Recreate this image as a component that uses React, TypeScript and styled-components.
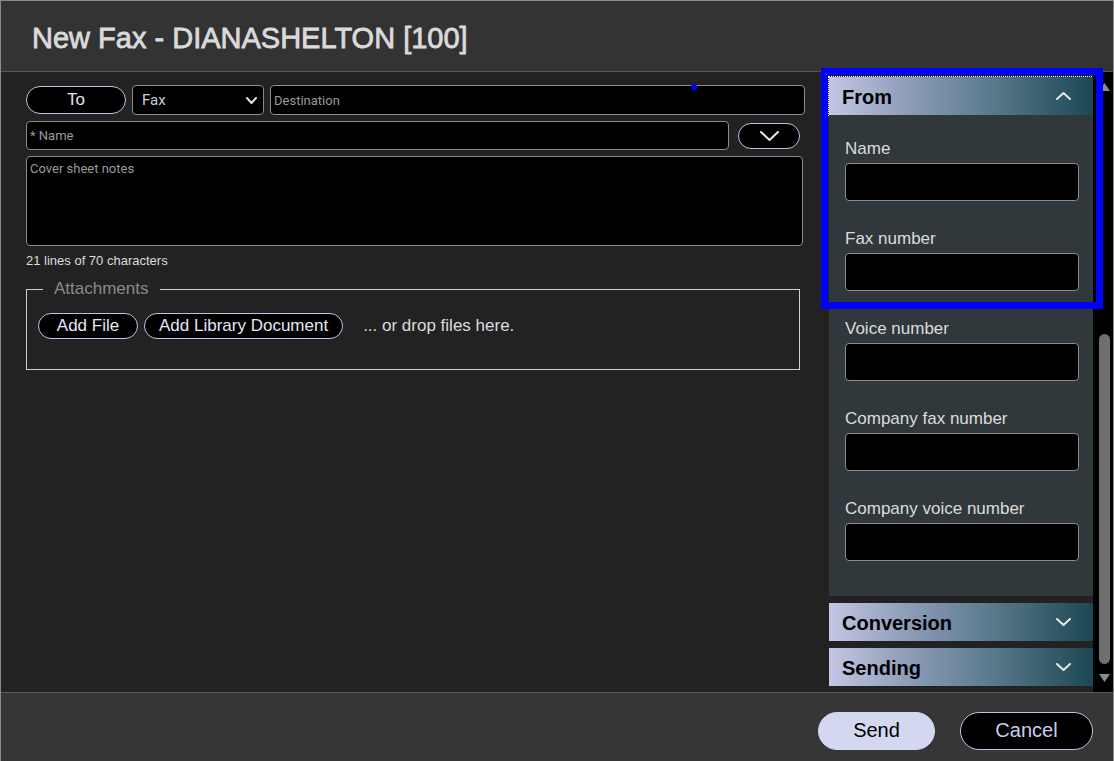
import React from "react"
import styled, { createGlobalStyle } from "styled-components"

const GlobalStyle = createGlobalStyle`
  html, body {
    margin: 0;
    padding: 0;
    background: #222;
    overflow: hidden;
  }
  * {
    box-sizing: border-box;
  }
`

const lavender = "#bfc3e6"

const Window = styled.div`
  width: 100vw;
  height: 100vh;
  display: flex;
  flex-direction: column;
  background: #222;
  border: 1px solid #8a8a8a;
  border-bottom: none;
  font-family: "Liberation Sans", Arial, sans-serif;
`

const Header = styled.header`
  height: 71px;
  flex: none;
  display: flex;
  align-items: center;
  padding-left: 31px;
  background: #333;
  border-bottom: 1px solid #555;
`

const Title = styled.h1`
  margin: 0;
  font-size: 29px;
  font-weight: 400;
  -webkit-text-stroke: 0.8px #dadada;
  color: #dadada;
  padding-top: 5px;
`

const Body = styled.div`
  flex: 1;
  display: flex;
  min-height: 0;
`

const Compose = styled.section`
  flex: 1;
  padding: 13px 24px 0 25px;
  display: flex;
  flex-direction: column;
`

const Row = styled.div<{ $gap: number; $top?: number }>`
  display: flex;
  align-items: center;
  gap: ${p => p.$gap}px;
  margin-top: ${p => p.$top || 0}px;
`

const PillButton = styled.button<{ $w?: number; $h: number; $size: number }>`
  width: ${p => (p.$w ? `${p.$w}px` : "auto")};
  min-width: ${p => (p.$w ? 0 : 100)}px;
  height: ${p => p.$h}px;
  padding: 0 14px;
  flex: none;
  display: flex;
  align-items: center;
  justify-content: center;
  background: #000;
  border: 1px solid ${lavender};
  border-radius: 999px;
  color: #e4e6f4;
  font-family: "Liberation Sans", Arial, sans-serif;
  font-size: ${p => p.$size}px;
`

const SelectBox = styled.div`
  width: 132px;
  height: 30px;
  flex: none;
  display: flex;
  align-items: center;
  justify-content: space-between;
  padding: 0 6px 0 9px;
  background: #000;
  border: 1px solid #8c8c8c;
  border-radius: 4px;
  color: #cfcfcf;
  font-family: Roboto, sans-serif;
  font-size: 15px;
`

const FieldWrap = styled.div`
  position: relative;
  flex: 1;
  display: flex;
`

const Input = styled.input<{ $h: number }>`
  flex: 1;
  width: 100%;
  height: ${p => p.$h}px;
  padding: 0 3px;
  background: #000;
  border: 1px solid #8c8c8c;
  border-radius: 4px;
  color: #ddd;
  font-family: Roboto, sans-serif;
  font-size: 13px;
  outline: none;

  &::placeholder {
    color: #9a9a9a;
  }
`

const Dot = styled.span`
  position: absolute;
  left: 421px;
  top: -1px;
  width: 6px;
  height: 6px;
  border-radius: 50%;
  background: #0000ff;
`

const Notes = styled.textarea`
  margin-top: 6px;
  margin-right: 2px;
  height: 90px;
  padding: 4px 3px;
  resize: none;
  background: #000;
  border: 1px solid #8c8c8c;
  border-radius: 4px;
  color: #ddd;
  font-family: Roboto, sans-serif;
  font-size: 13px;
  outline: none;

  &::placeholder {
    color: #9a9a9a;
  }
`

const Hint = styled.div`
  margin-top: 7px;
  font-size: 13px;
  line-height: 16px;
  color: #dcdcdc;
`

const Attachments = styled.fieldset`
  margin: 10px 5px 0 0;
  padding: 14px 11px 30px;
  border: 1px solid #cfcfcf;
  display: flex;
  align-items: center;
  gap: 6px;
`

const Legend = styled.legend`
  margin-left: 5px;
  padding: 0 11px;
  font-size: 17px;
  line-height: 20px;
  color: #8a8a8a;
`

const DropText = styled.span`
  margin-left: 14px;
  font-size: 17px;
  color: #dcdcdc;
`

const Side = styled.aside`
  position: relative;
  width: 284px;
  flex: none;
  display: flex;
`

const Panels = styled.div`
  width: 264px;
  padding-top: 5px;
  display: flex;
  flex-direction: column;
  gap: 7px;
`

const Group = styled.div`
  flex: 1;
  display: flex;
  flex-direction: column;
`

const PanelHead = styled.div<{ $focus?: boolean }>`
  height: 38px;
  flex: none;
  display: flex;
  align-items: center;
  justify-content: space-between;
  padding: 3px 22px 0 13px;
  background: linear-gradient(90deg, #c3c6e4 0%, #8e9cb8 30%, #587a8c 62%, #1d4753 100%);
  outline: ${p => (p.$focus ? "1px dotted #fff" : "none")};
  font-size: 20px;
  font-weight: 700;
  color: #000;

  svg {
    margin-top: -3px;
  }
`

const PanelBody = styled.div`
  flex: 1;
  padding: 24px 14px 8px 16px;
  background: #30383b;
  display: flex;
  flex-direction: column;
  gap: 28px;
`

const Field = styled.label`
  display: flex;
  flex-direction: column;
  gap: 4px;
  font-size: 17px;
  line-height: 20px;
  color: #dcdcdc;
`

const BoxInput = styled.input`
  height: 38px;
  background: #000;
  border: 1px solid #8c8c8c;
  border-radius: 4px;
  outline: none;
  color: #ddd;
`

const ScrollTrack = styled.div`
  width: 20px;
  background: #000;
  display: flex;
  flex-direction: column;
  align-items: center;
  padding: 11px 0 10px 3px;
`

const Thumb = styled.div`
  width: 11px;
  margin: 243px 0 10px;
  flex: 1;
  border-radius: 6px;
  background: #6f6f6f;
`

const Highlight = styled.div`
  position: absolute;
  left: -8px;
  top: -4px;
  width: 282px;
  height: 241px;
  border: 7px solid #0000ff;
  pointer-events: none;
`

const Footer = styled.footer`
  height: 69px;
  flex: none;
  display: flex;
  align-items: center;
  justify-content: flex-end;
  gap: 25px;
  padding: 7px 20px 0 0;
  background: #363636;
  border-top: 1px solid #595959;
`

const ActionButton = styled.button<{ $primary?: boolean; $w: number }>`
  width: ${p => p.$w}px;
  height: 38px;
  border-radius: 999px;
  border: 1px solid ${p => (p.$primary ? "#d3d7ef" : lavender)};
  background: ${p => (p.$primary ? "#d3d7ef" : "#000")};
  color: ${p => (p.$primary ? "#000" : "#c9cdea")};
  font-family: "Liberation Sans", Arial, sans-serif;
  font-size: 20px;
`

const Chevron = ({ w, h, up, color, sw }: { w: number; h: number; up?: boolean; color: string; sw: number }) => (
  <svg width={w} height={h} viewBox={`0 0 ${w} ${h}`} fill="none">
    <polyline
      points={up ? `1,${h - 1} ${w / 2},1 ${w - 1},${h - 1}` : `1,1 ${w / 2},${h - 1} ${w - 1},1`}
      stroke={color}
      strokeWidth={sw}
      strokeLinecap="round"
      strokeLinejoin="round"
    />
  </svg>
)

const Arrow = ({ up }: { up?: boolean }) => (
  <svg width="11" height="8" viewBox="0 0 11 8">
    <polygon points={up ? "5.5,0 11,8 0,8" : "0,0 11,0 5.5,8"} fill="#8a8a8a" />
  </svg>
)

const fromFields = ["Name", "Fax number", "Voice number", "Company fax number", "Company voice number"]

const App = () => {
  return (
    <>
      <GlobalStyle />
      <Window>
        <Header>
          <Title>New Fax - DIANASHELTON [100]</Title>
        </Header>
        <Body>
          <Compose>
            <Row $gap={6}>
              <PillButton $w={100} $h={28} $size={17}>To</PillButton>
              <SelectBox>
                Fax
                <Chevron w={11} h={7} color="#e0e0e0" sw={2} />
              </SelectBox>
              <FieldWrap>
                <Input $h={30} placeholder="Destination" />
                <Dot />
              </FieldWrap>
            </Row>
            <Row $gap={9} $top={6}>
              <FieldWrap>
                <Input $h={29} placeholder="* Name" />
              </FieldWrap>
              <PillButton $w={62} $h={26} $size={17} style={{ marginRight: 5 }}>
                <Chevron w={19} h={10} color="#e6e6e6" sw={2} />
              </PillButton>
            </Row>
            <Notes placeholder="Cover sheet notes" />
            <Hint>21 lines of 70 characters</Hint>
            <Attachments>
              <Legend>Attachments</Legend>
              <PillButton $h={26} $size={17}>Add File</PillButton>
              <PillButton $h={26} $size={17}>Add Library Document</PillButton>
              <DropText>... or drop files here.</DropText>
            </Attachments>
          </Compose>
          <Side>
            <Panels>
              <Group>
                <PanelHead $focus>
                  From
                  <Chevron w={15} h={8} up color="#e8e8e8" sw={2} />
                </PanelHead>
                <PanelBody>
                  {fromFields.map(f => (
                    <Field key={f}>
                      {f}
                      <BoxInput />
                    </Field>
                  ))}
                </PanelBody>
              </Group>
              <PanelHead>
                Conversion
                <Chevron w={15} h={8} color="#e8e8e8" sw={2} />
              </PanelHead>
              <PanelHead style={{ marginBottom: 6 }}>
                Sending
                <Chevron w={15} h={8} color="#e8e8e8" sw={2} />
              </PanelHead>
            </Panels>
            <ScrollTrack>
              <Arrow up />
              <Thumb />
              <Arrow />
            </ScrollTrack>
            <Highlight />
          </Side>
        </Body>
        <Footer>
          <ActionButton $primary $w={117}>Send</ActionButton>
          <ActionButton $w={133}>Cancel</ActionButton>
        </Footer>
      </Window>
    </>
  )
}

export default App
